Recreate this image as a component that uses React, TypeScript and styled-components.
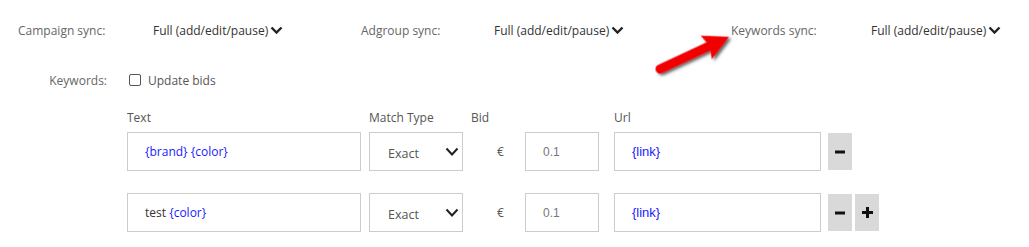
import React from 'react';
import styled, { createGlobalStyle } from 'styled-components';

const GlobalStyle = createGlobalStyle`
  html, body {
    margin: 0;
    padding: 0;
    background: #ffffff;
  }
  body {
    font-family: 'Open Sans', 'Liberation Sans', sans-serif;
    font-size: 12px;
    color: #333;
  }
`;

const Page = styled.div`
  position: relative;
  width: 1029px;
  height: 247px;
  overflow: hidden;
`;

const SyncRow = styled.div`
  display: grid;
  grid-template-columns: 135px 208px 133px 237px 140px auto;
  align-items: center;
  height: 60px;
  padding-left: 18px;
`;

const SyncLabel = styled.span`
  color: #666;
`;

const SyncValue = styled.span`
  display: inline-flex;
  align-items: center;
  color: #333;
  cursor: pointer;

  svg {
    margin-left: 2px;
  }
`;

const OptionRow = styled.div`
  display: flex;
  align-items: center;
  height: 40px;
`;

const OptionLabel = styled.span`
  width: 107px;
  text-align: right;
  color: #666;
`;

const CheckLabel = styled.label`
  display: inline-flex;
  align-items: center;
  gap: 7px;
  margin-left: 22px;
  color: #555;
`;

const CheckBox = styled.span`
  display: inline-block;
  width: 10px;
  height: 10px;
  border: 1px solid #555;
  border-radius: 2px;
  background: #fff;
`;

const Table = styled.div`
  display: grid;
  grid-template-columns: 242px 102px 54px 89px 214px auto;
  grid-auto-rows: auto;
  align-items: center;
  margin-left: 127px;
  margin-top: 9px;
`;

const HeadCell = styled.div`
  line-height: 17px;
  color: #555;
  margin-bottom: 6px;
`;

const Cell = styled.div<{ $last?: boolean }>`
  display: flex;
  align-items: center;
  margin-bottom: ${(p) => (p.$last ? 0 : 22)}px;
`;

const Field = styled.div<{ $width: number; $mono?: boolean }>`
  box-sizing: border-box;
  width: ${(p) => p.$width}px;
  height: 39px;
  border: 1px solid #ccc;
  background: #fff;
  display: flex;
  align-items: center;
  padding-left: 17px;
  font-family: ${(p) =>
    p.$mono ? "'Liberation Sans', Arial, sans-serif" : "'Open Sans', sans-serif"};
  font-size: ${(p) => (p.$mono ? 13 : 12)}px;
  color: #333;
`;

const Token = styled.span`
  color: #1a1aff;
`;

const BidValue = styled.span`
  color: #777;
  font-size: 12px;
`;

const SelectBox = styled.div`
  box-sizing: border-box;
  width: 94px;
  height: 39px;
  border: 1px solid #ccc;
  background: #fff;
  display: flex;
  align-items: center;
  justify-content: space-between;
  padding: 3px 3px 0 18px;
  color: #555;
  font-size: 12.5px;

  svg {
    margin-top: -3px;
  }
`;

const Currency = styled.span`
  padding-left: 26px;
  color: #555;
`;

const Buttons = styled.div`
  display: flex;
  gap: 3px;
  align-self: start;
`;

const IconButton = styled.button`
  width: 24px;
  height: 37px;
  border: none;
  padding: 0;
  background: #d9d9d9;
  display: flex;
  align-items: center;
  justify-content: center;
  cursor: pointer;
`;

const Arrow = styled.svg`
  position: absolute;
  left: 640px;
  top: 20px;
  overflow: visible;
`;

const Chevron = ({ w = 13, h = 8, sw = 2.4 }: { w?: number; h?: number; sw?: number }) => (
  <svg width={w} height={h} viewBox={`0 0 ${w} ${h}`}>
    <polyline
      points={`1.5,1.5 ${w / 2},${h - 1.5} ${w - 1.5},1.5`}
      fill="none"
      stroke="#222"
      strokeWidth={sw}
    />
  </svg>
);

const Minus = () => (
  <svg width="10" height="10" viewBox="0 0 10 10">
    <rect x="0" y="3.5" width="10" height="3" fill="#111" />
  </svg>
);

const Plus = () => (
  <svg width="11" height="11" viewBox="0 0 11 11">
    <rect x="0" y="4" width="11" height="3" fill="#111" />
    <rect x="4" y="0" width="3" height="11" fill="#111" />
  </svg>
);

const syncs = ['Campaign sync:', 'Adgroup sync:', 'Keywords sync:'];

type Row = { text: React.ReactNode; bid: string; url: string; canAdd: boolean };

const rows: Row[] = [
  {
    text: <Token>{'{brand} {color}'}</Token>,
    bid: '0.1',
    url: '{link}',
    canAdd: false,
  },
  {
    text: (
      <>
        test&nbsp;<Token>{'{color}'}</Token>
      </>
    ),
    bid: '0.1',
    url: '{link}',
    canAdd: true,
  },
];

export default function App() {
  return (
    <Page>
      <GlobalStyle />
      <SyncRow>
        {syncs.map((label) => (
          <React.Fragment key={label}>
            <SyncLabel>{label}</SyncLabel>
            <SyncValue>
              Full (add/edit/pause)
              <Chevron />
            </SyncValue>
          </React.Fragment>
        ))}
      </SyncRow>

      <OptionRow>
        <OptionLabel>Keywords:</OptionLabel>
        <CheckLabel>
          <CheckBox />
          Update bids
        </CheckLabel>
      </OptionRow>

      <Table>
        <HeadCell>Text</HeadCell>
        <HeadCell>Match Type</HeadCell>
        <HeadCell>Bid</HeadCell>
        <HeadCell />
        <HeadCell>Url</HeadCell>
        <HeadCell />
        {rows.map((row, i) => {
          const last = i === rows.length - 1;
          return (
            <React.Fragment key={i}>
              <Cell $last={last}>
                <Field $width={234}>{row.text}</Field>
              </Cell>
              <Cell $last={last}>
                <SelectBox>
                  Exact
                  <Chevron w={14} h={9} sw={2} />
                </SelectBox>
              </Cell>
              <Cell $last={last}>
                <Currency>€</Currency>
              </Cell>
              <Cell $last={last}>
                <Field $width={74} $mono>
                  <BidValue>{row.bid}</BidValue>
                </Field>
              </Cell>
              <Cell $last={last}>
                <Field $width={207} $mono>
                  <Token>{row.url}</Token>
                </Field>
              </Cell>
              <Cell $last={last}>
                <Buttons>
                  <IconButton aria-label="remove">
                    <Minus />
                  </IconButton>
                  {row.canAdd && (
                    <IconButton aria-label="add">
                      <Plus />
                    </IconButton>
                  )}
                </Buttons>
              </Cell>
            </React.Fragment>
          );
        })}
      </Table>

      <Arrow width="100" height="70" viewBox="0 0 100 70">
        <defs>
          <filter id="arrowShadow" x="-30%" y="-30%" width="160%" height="160%">
            <feDropShadow dx="1.5" dy="2.5" stdDeviation="1.6" floodColor="#000" floodOpacity="0.65" />
          </filter>
        </defs>
        <g filter="url(#arrowShadow)" transform="translate(20 49) rotate(-25)">
          <line x1="0" y1="0" x2="58" y2="0" stroke="#f20000" strokeWidth="9" strokeLinecap="round" />
          <polygon points="51,-13 76,0 51,13 55,0" fill="#f20000" />
        </g>
      </Arrow>
    </Page>
  );
}
